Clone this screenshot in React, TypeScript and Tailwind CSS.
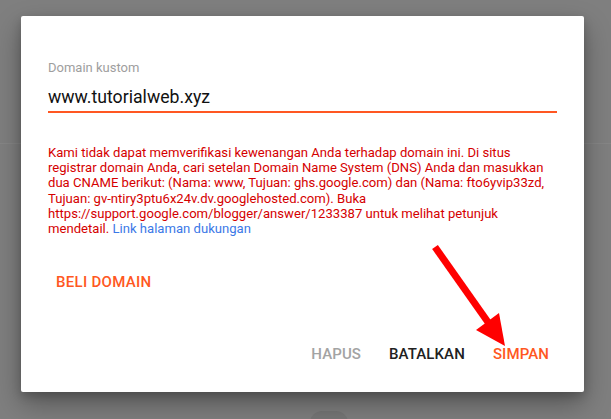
export default function App() {
  return (
    <div className="relative h-[419px] overflow-hidden bg-[#7f7f7f] font-['Roboto',sans-serif]">
      {/* page behind the overlay */}
      <div className="absolute left-0 right-0 top-[143px] h-px bg-[#868686]" />
      <div className="absolute left-[310px] top-[411px] h-[12px] w-[38px] rounded-t-full bg-[#777777]" />

      <div className="relative ml-[21px] mt-[16px] flex h-[376px] w-[563px] flex-col rounded-[2px] bg-white px-[27px] pt-[45px] shadow-[0_12px_28px_rgba(0,0,0,0.32),0_4px_10px_rgba(0,0,0,0.18)]">
        <label className="text-[13px] leading-[14px] text-[#9e9e9e]">Domain kustom</label>
        <div className="mt-[11px] border-b-2 border-[#ff5722] pb-[3px] text-[17.7px] leading-[22px] text-[#111]">
          www.tutorialweb.xyz
        </div>

        <p className="mt-[32px] text-[13.1px] leading-[15.2px] text-[#d50000]">
          Kami tidak dapat memverifikasi kewenangan Anda terhadap domain ini. Di situs registrar domain Anda, cari
          setelan Domain Name System (DNS) Anda dan masukkan dua CNAME berikut: (Nama: www, Tujuan: ghs.google.com)
          dan (Nama: fto6yvip33zd, Tujuan: gv-ntiry3ptu6x24v.dv.googlehosted.com). Buka
          https://support.google.com/blogger/answer/1233387 untuk melihat petunjuk mendetail.{" "}
          <a className="text-[#3b78e7]">Link halaman dukungan</a>
        </p>

        <div className="mt-[28px] flex">
          <button className="h-9 px-2 text-[15px] font-medium uppercase tracking-[0.3px] text-[#ff5722]">
            Beli domain
          </button>
        </div>

        <div className="mt-[36px] flex justify-end gap-[12px]">
          <button className="h-9 px-2 text-[15px] font-medium uppercase tracking-[0.1px] text-[#a3a3a3]">Hapus</button>
          <button className="h-9 px-2 text-[15px] font-medium uppercase tracking-[0.1px] text-[#212121]">Batalkan</button>
          <button className="h-9 px-2 text-[15px] font-medium uppercase tracking-[0.1px] text-[#ff5722]">Simpan</button>
        </div>
      </div>

      {/* annotation arrow */}
      <svg className="absolute left-0 top-0" width="611" height="419" viewBox="0 0 611 419">
        <line x1="435" y1="247" x2="490" y2="325" stroke="#ff0000" strokeWidth="7" />
        <polygon points="505,346 476,330 499,313" fill="#ff0000" />
      </svg>
    </div>
  );
}
